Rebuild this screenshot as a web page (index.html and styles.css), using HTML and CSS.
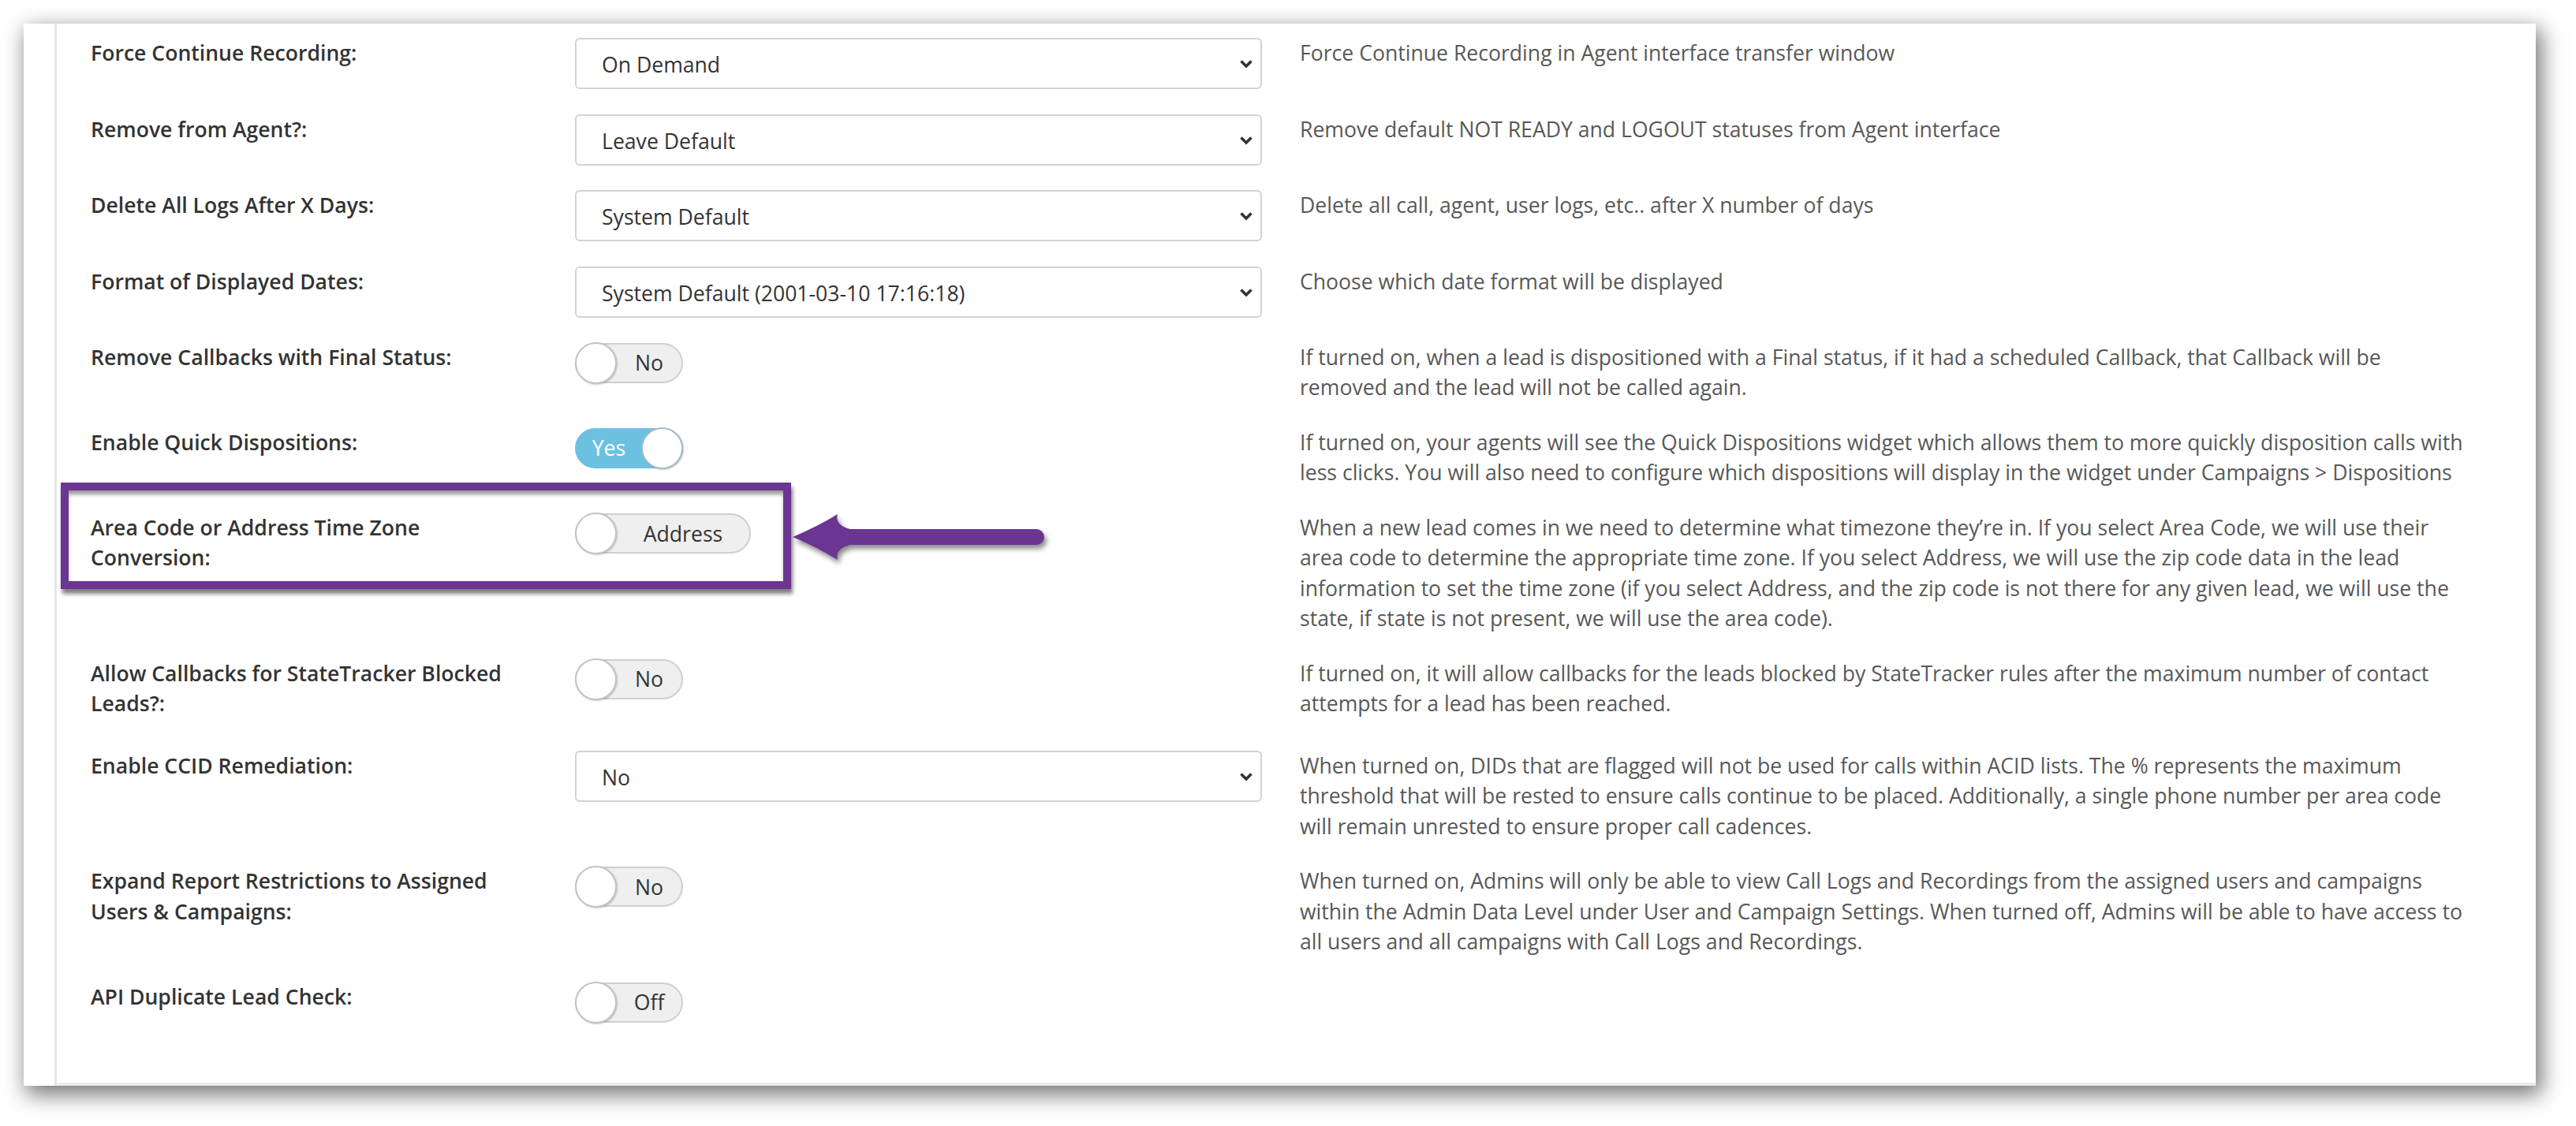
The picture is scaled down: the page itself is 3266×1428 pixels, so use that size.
FILE: index.html
```html
<!DOCTYPE html>
<html lang="en">
<head>
    <meta charset="UTF-8">
    <meta name="viewport" content="width=device-width, initial-scale=1.0">
    <title>System Settings</title>
    <link rel="stylesheet" href="styles.css">
</head>
<body>
    <div class="frame">
        <div class="panel">

            <!-- Select settings -->
            <div class="setting">
                <label class="setting-label" for="forceRecording">Force Continue Recording:</label>
                <div class="select-wrap">
                    <select id="forceRecording"><option>On Demand</option></select>
                    <svg class="chevron" viewBox="0 0 18 12"><path d="M2.5 2.5 L9 9 L15.5 2.5"/></svg>
                </div>
                <div class="setting-help">Force Continue Recording in Agent interface transfer window</div>
            </div>

            <div class="setting">
                <label class="setting-label" for="removeAgent">Remove from Agent?:</label>
                <div class="select-wrap">
                    <select id="removeAgent"><option>Leave Default</option></select>
                    <svg class="chevron" viewBox="0 0 18 12"><path d="M2.5 2.5 L9 9 L15.5 2.5"/></svg>
                </div>
                <div class="setting-help">Remove default NOT READY and LOGOUT statuses from Agent interface</div>
            </div>

            <div class="setting">
                <label class="setting-label" for="deleteLogs">Delete All Logs After X Days:</label>
                <div class="select-wrap">
                    <select id="deleteLogs"><option>System Default</option></select>
                    <svg class="chevron" viewBox="0 0 18 12"><path d="M2.5 2.5 L9 9 L15.5 2.5"/></svg>
                </div>
                <div class="setting-help">Delete all call, agent, user logs, etc.. after X number of days</div>
            </div>

            <div class="setting">
                <label class="setting-label" for="dateFormat">Format of Displayed Dates:</label>
                <div class="select-wrap">
                    <select id="dateFormat"><option>System Default (2001-03-10 17:16:18)</option></select>
                    <svg class="chevron" viewBox="0 0 18 12"><path d="M2.5 2.5 L9 9 L15.5 2.5"/></svg>
                </div>
                <div class="setting-help">Choose which date format will be displayed</div>
            </div>

            <!-- Toggle settings -->
            <div class="setting">
                <div class="setting-label">Remove Callbacks with Final Status:</div>
                <div>
                    <div class="switch"><span class="knob"></span><span class="switch-text">No</span></div>
                </div>
                <div class="setting-help">If turned on, when a lead is dispositioned with a Final status, if it had a scheduled Callback, that Callback will be removed and the lead will not be called again.</div>
            </div>

            <div class="setting">
                <div class="setting-label">Enable Quick Dispositions:</div>
                <div>
                    <div class="switch on"><span class="knob"></span><span class="switch-text">Yes</span></div>
                </div>
                <div class="setting-help">If turned on, your agents will see the Quick Dispositions widget which allows them to more quickly disposition calls with less clicks. You will also need to configure which dispositions will display in the widget under Campaigns &gt; Dispositions</div>
            </div>

            <div class="setting">
                <div class="setting-label">Area Code or Address Time Zone Conversion:</div>
                <div>
                    <div class="switch switch-wide"><span class="knob"></span><span class="switch-text">Address</span></div>
                </div>
                <div class="setting-help">When a new lead comes in we need to determine what timezone they’re in. If you select Area Code, we will use their area code to determine the appropriate time zone. If you select Address, we will use the zip code data in the lead information to set the time zone (if you select Address, and the zip code is not there for any given lead, we will use the state, if state is not present, we will use the area code).</div>
            </div>

            <div class="setting">
                <div class="setting-label">Allow Callbacks for StateTracker Blocked Leads?:</div>
                <div>
                    <div class="switch"><span class="knob"></span><span class="switch-text">No</span></div>
                </div>
                <div class="setting-help">If turned on, it will allow callbacks for the leads blocked by StateTracker rules after the maximum number of contact attempts for a lead has been reached.</div>
            </div>

            <div class="setting spaced">
                <label class="setting-label" for="ccid">Enable CCID Remediation:</label>
                <div class="select-wrap">
                    <select id="ccid"><option>No</option></select>
                    <svg class="chevron" viewBox="0 0 18 12"><path d="M2.5 2.5 L9 9 L15.5 2.5"/></svg>
                </div>
                <div class="setting-help">When turned on, DIDs that are flagged will not be used for calls within ACID lists. The % represents the maximum threshold that will be rested to ensure calls continue to be placed. Additionally, a single phone number per area code will remain unrested to ensure proper call cadences.</div>
            </div>

            <div class="setting">
                <div class="setting-label">Expand Report Restrictions to Assigned Users &amp; Campaigns:</div>
                <div>
                    <div class="switch"><span class="knob"></span><span class="switch-text">No</span></div>
                </div>
                <div class="setting-help">When turned on, Admins will only be able to view Call Logs and Recordings from the assigned users and campaigns within the Admin Data Level under User and Campaign Settings. When turned off, Admins will be able to have access to all users and all campaigns with Call Logs and Recordings.</div>
            </div>

            <div class="setting">
                <div class="setting-label">API Duplicate Lead Check:</div>
                <div>
                    <div class="switch"><span class="knob"></span><span class="switch-text">Off</span></div>
                </div>
                <div class="setting-help"></div>
            </div>

        </div>

        <!-- Annotation -->
        <div class="callout"></div>
        <svg class="pointer" viewBox="0 0 340 90">
            <path d="M5 41 Q36 28 62 12 Q58 26 78 31 L314 31 A10 10 0 0 1 314 51 L78 51 Q58 56 62 70 Q36 54 5 41 Z"/>
        </svg>
    </div>
</body>
</html>
```

FILE: styles.css
```css
* {
    margin: 0;
    padding: 0;
    box-sizing: border-box;
}

body {
    width: 3266px;
    height: 1428px;
    overflow: hidden;
    background: #fff;
    font-family: "Open Sans", Arial, sans-serif;
    font-size: 26.6px;
    line-height: 38.3px;
}

.frame {
    position: relative;
    margin: 30px 0 0 30px;
    width: 3185px;
    height: 1347px;
    background: #fff;
    box-shadow: 5px 9px 26px 2px rgba(0, 0, 0, 0.55);
}

.panel {
    height: 100%;
    margin-left: 39px;
    border-left: 3px solid #e6e6e6;
    border-bottom: 4px solid #ebebeb;
    padding: 18px 0 0 43px;
}

.setting {
    display: grid;
    grid-template-columns: 566px 871px 1482px;
    column-gap: 48px;
    align-items: start;
    margin-bottom: 31.5px;
}

.setting.spaced {
    padding-top: 9px;
}

.setting-label {
    font-weight: 600;
    color: #333;
}

.setting-help {
    color: #585858;
}

.select-wrap {
    position: relative;
}

.select-wrap select {
    appearance: none;
    -webkit-appearance: none;
    display: block;
    width: 100%;
    height: 65px;
    padding: 4px 60px 0 32px;
    border: 2px solid #d3d3d3;
    border-radius: 6px;
    background: #fff;
    font: inherit;
    color: #333;
}

.chevron {
    position: absolute;
    right: 11px;
    top: 27px;
    width: 18px;
    height: 12px;
    fill: none;
    stroke: #333;
    stroke-width: 3.6;
    pointer-events: none;
}

.switch {
    display: flex;
    align-items: center;
    width: 137px;
    height: 51px;
    margin-top: 1px;
    border: 2px solid #cfcfcf;
    border-radius: 26px;
    background: #efefef;
    color: #333;
}

.switch-wide {
    width: 223px;
}

.knob {
    flex: none;
    width: 53px;
    height: 53px;
    margin: -2px 0 -2px -2px;
    border-radius: 50%;
    background: #fff;
    border: 2px solid #c4c4c4;
    box-shadow: 1px 1px 2px rgba(0, 0, 0, 0.2);
}

.switch-text {
    flex: 1;
    text-align: center;
}

.switch.on {
    flex-direction: row-reverse;
    background: #6cc1e0;
    border-color: #6cc1e0;
    color: #fff;
}

.switch.on .knob {
    margin: -2px -2px -2px 0;
    border-color: #a9bcc6;
}

.callout {
    position: absolute;
    left: 47px;
    top: 582px;
    width: 926px;
    height: 135px;
    border: 10px solid #6b3592;
    box-shadow: 2px 6px 5px rgba(0, 0, 0, 0.5), inset 0 6px 5px -1px rgba(0, 0, 0, 0.4);
}

.pointer {
    position: absolute;
    left: 970px;
    top: 610px;
    width: 340px;
    height: 90px;
    overflow: visible;
}

.pointer path {
    fill: #6b3592;
    filter: drop-shadow(3px 5px 3px rgba(0, 0, 0, 0.45));
}
```
